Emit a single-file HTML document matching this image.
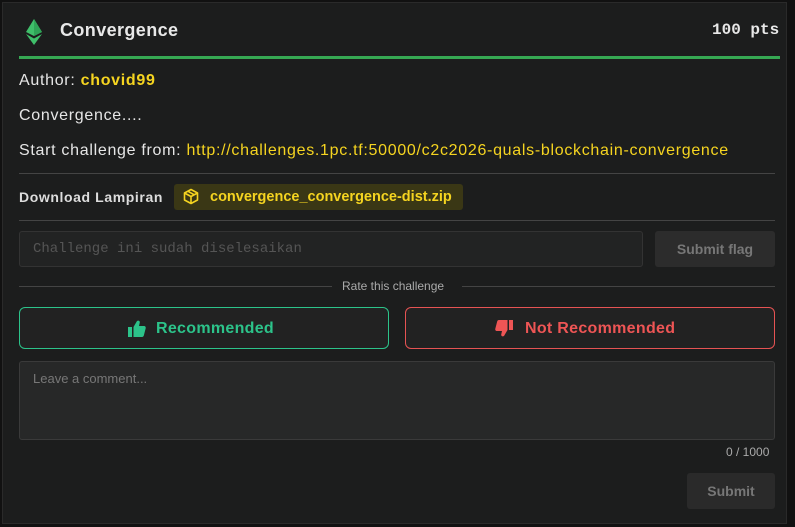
<!DOCTYPE html>
<html><head><meta charset="utf-8"><style>
*{box-sizing:border-box;margin:0;padding:0}
body{width:795px;height:527px;background:#111;overflow:hidden;font-family:"Liberation Sans",sans-serif;position:relative}
.card{position:absolute;left:2px;top:2px;width:785px;height:522px;background:#1c1d1d;border:1px solid #2a2a2a}
.abs{position:absolute}
.t{color:#e6e6e6;font-size:16px;letter-spacing:0.7px}
.y{color:#f5d420}
</style></head><body>
<div class="card"></div>
<svg class="abs" style="left:25px;top:19px" width="18" height="26" viewBox="0 0 18 26">
<polygon points="9,0 17,13 9,17 1,13" fill="#3fbf6a"/>
<polygon points="1,15 9,19.5 17,15 9,26" fill="#3fbf6a"/>
<polygon points="9,0 9,17 17,13" fill="#2fa457"/>
</svg>
<div class="abs" style="left:60px;top:20px;color:#e8e8e8;font-weight:bold;font-size:18px;letter-spacing:0.4px">Convergence</div>
<div class="abs" style="left:712px;top:21px;color:#e8e8e8;font-weight:bold;font-family:'Liberation Mono',monospace;font-size:16px">100 pts</div>
<div class="abs" style="left:19px;top:56px;width:761px;height:3px;background:#36a853"></div>
<div class="abs t" style="left:19px;top:72px">Author: <b class="y">chovid99</b></div>
<div class="abs t" style="left:19px;top:107px">Convergence....</div>
<div class="abs t" style="left:19px;top:142px">Start challenge from: <span class="y">http://challenges.1pc.tf:50000/c2c2026-quals-blockchain-convergence</span></div>
<div class="abs" style="left:19px;top:173px;width:756px;height:1px;background:#444"></div>
<div class="abs" style="left:19px;top:189px;color:#ddd;font-weight:bold;font-size:14px;letter-spacing:0.6px">Download Lampiran</div>
<div class="abs" style="left:174px;top:184px;width:289px;height:26px;background:#3a3715;border-radius:3px"></div>
<svg class="abs" style="left:183px;top:188px" width="16" height="17" viewBox="0 0 16 17" fill="none" stroke="#f5d420" stroke-width="1.6" stroke-linejoin="round"><path d="M8 1.5L14.5 5v7L8 15.5 1.5 12V5z M1.5 5L8 8.5 14.5 5 M8 8.5v7 M4.8 3.2l6.5 3.6"/></svg>
<div class="abs y" style="left:210px;top:189px;font-weight:bold;font-size:14.5px">convergence_convergence-dist.zip</div>
<div class="abs" style="left:19px;top:220px;width:756px;height:1px;background:#444"></div>
<div class="abs" style="left:19px;top:231px;width:624px;height:36px;background:#222323;border:1px solid #333;border-radius:3px"></div>
<div class="abs" style="left:33px;top:241px;color:#555;font-family:'Liberation Mono',monospace;font-size:14px">Challenge ini sudah diselesaikan</div>
<div class="abs" style="left:655px;top:231px;width:120px;height:36px;background:#2c2c2c;border-radius:3px;color:#777;font-weight:bold;font-size:14px;text-align:center;line-height:36px">Submit flag</div>
<div class="abs" style="left:19px;top:286px;width:313px;height:1px;background:#444"></div>
<div class="abs" style="left:462px;top:286px;width:313px;height:1px;background:#444"></div>
<div class="abs" style="left:342px;top:279px;color:#aaa;font-size:12px">Rate this challenge</div>
<div class="abs" style="left:19px;top:307px;width:370px;height:42px;border:1px solid #2cc38a;border-radius:6px;background:#222"></div>
<svg class="abs" style="left:128px;top:320px" width="18" height="17" viewBox="0 0 18 17" fill="#2cc38a"><rect x="0" y="7" width="4" height="10"/><path d="M5.5 7L9 1c1.5-1 3 0 2.8 1.5L11 6h5c1.3 0 2 1.2 1.7 2.3l-1.8 7C15.6 16.4 15 17 14 17H5.5z"/></svg>
<div class="abs" style="left:156px;top:320px;color:#2cc38a;font-weight:bold;font-size:16px;letter-spacing:0.3px">Recommended</div>
<div class="abs" style="left:405px;top:307px;width:370px;height:42px;border:1px solid #e55353;border-radius:6px;background:#222"></div>
<svg class="abs" style="left:495px;top:320px" width="18" height="17" viewBox="0 0 18 17" fill="#ee5555"><rect x="14" y="0" width="4" height="10"/><path d="M12.5 10L9 16c-1.5 1-3 0-2.8-1.5L7 11H2c-1.3 0-2-1.2-1.7-2.3l1.8-7C2.4.6 3 0 4 0h8.5z"/></svg>
<div class="abs" style="left:525px;top:320px;color:#ee5555;font-weight:bold;font-size:16px;letter-spacing:0.3px">Not Recommended</div>
<div class="abs" style="left:19px;top:361px;width:756px;height:79px;background:#272828;border:1px solid #3a3a3a;border-radius:3px"></div>
<div class="abs" style="left:33px;top:371px;color:#777;font-size:13px">Leave a comment...</div>
<div class="abs" style="left:726px;top:445px;color:#aaa;font-size:12px">0 / 1000</div>
<div class="abs" style="left:687px;top:473px;width:88px;height:36px;background:#2a2a2a;border-radius:3px;color:#777;font-weight:bold;font-size:14px;text-align:center;line-height:36px">Submit</div>
</body></html>
